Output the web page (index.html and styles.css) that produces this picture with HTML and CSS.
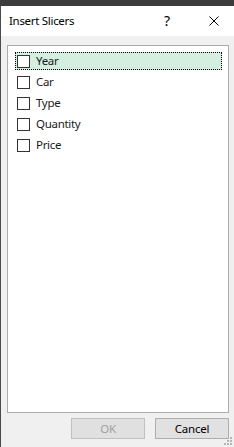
FILE: index.html
```html
<!DOCTYPE html>
<html>
<head>
<meta charset="utf-8">
<link rel="stylesheet" href="styles.css">
</head>
<body>
<div class="topbar"></div>
<div class="window">
  <div class="titlebar">
    <span class="title">Insert Slicers</span>
    <span class="help">?</span>
    <span class="close">
      <svg width="10" height="10" viewBox="0 0 10 10"><path d="M0.5 0.5 L9.5 9.5 M9.5 0.5 L0.5 9.5" stroke="#000" stroke-width="1" fill="none"/></svg>
    </span>
  </div>
  <div class="content">
    <div class="listbox">
      <div class="item selected"><span class="check"></span><span class="label">Year</span></div>
      <div class="item"><span class="check"></span><span class="label">Car</span></div>
      <div class="item"><span class="check"></span><span class="label">Type</span></div>
      <div class="item"><span class="check"></span><span class="label">Quantity</span></div>
      <div class="item"><span class="check"></span><span class="label">Price</span></div>
    </div>
    <div class="footer">
      <button class="btn disabled">OK</button>
      <button class="btn">Cancel</button>
    </div>
  </div>
  <svg class="grip" width="9" height="9" viewBox="0 0 9 9">
    <g fill="#b4b4b4">
      <rect x="6" y="0" width="2" height="2"/>
      <rect x="3" y="3" width="2" height="2"/>
      <rect x="6" y="3" width="2" height="2"/>
      <rect x="0" y="6" width="2" height="2"/>
      <rect x="3" y="6" width="2" height="2"/>
      <rect x="6" y="6" width="2" height="2"/>
    </g>
  </svg>
</div>
</body>
</html>
```
FILE: styles.css
```css
html, body {
  margin: 0;
  padding: 0;
}
body {
  width: 234px;
  height: 447px;
  overflow: hidden;
  background: #f0f0f0;
  font-family: "Segoe UI", "Noto Sans", "Open Sans", sans-serif;
  font-size: 11.5px;
  letter-spacing: -0.3px;
}
.topbar {
  height: 6px;
  background: #3c3c3c;
}
.window {
  position: relative;
  height: 441px;
  border-left: 1px solid #4b4b4b;
  box-sizing: border-box;
  display: flex;
  flex-direction: column;
}
.titlebar {
  height: 30px;
  background: #ffffff;
  display: flex;
  align-items: center;
  padding-left: 8px;
  color: #000;
}
.title {
  flex: 1;
  font-size: 11.5px;
  padding-bottom: 2px;
}
.help {
  width: 20px;
  font-size: 14px;
  letter-spacing: 0;
  margin-right: 25px;
  padding-bottom: 2px;
}
.close {
  width: 10px;
  height: 10px;
  margin-right: 15px;
  display: flex;
}
.content {
  flex: 1;
  display: flex;
  flex-direction: column;
  padding: 9px 5px 8px 6px;
}
.listbox {
  height: 368px;
  box-sizing: border-box;
  background: #fff;
  border: 1px solid #acacac;
  padding: 6px 6px 0 7px;
  display: flex;
  flex-direction: column;
  gap: 3px;
}
.item {
  height: 18px;
  box-sizing: border-box;
  display: flex;
  align-items: center;
  padding-left: 1px;
  border: 1px solid transparent;
  color: #1a1a1a;
}
.item.selected {
  background: #d4efdf;
  border: 1px dotted #000;
}
.check {
  width: 13px;
  height: 13px;
  box-sizing: border-box;
  border: 1px solid #333;
  background: #fff;
  margin-top: 1px;
  margin-right: 6px;
}
.label {
  font-size: 11.5px;
  line-height: 16px;
}
.footer {
  display: flex;
  justify-content: flex-end;
  gap: 10px;
  margin-top: 5px;
}
.btn {
  width: 74px;
  height: 21px;
  box-sizing: border-box;
  margin: 0;
  padding: 0;
  background: #e1e1e1;
  border: 1px solid #adadad;
  font-family: "Segoe UI", "Noto Sans", "Open Sans", sans-serif;
  font-size: 11.5px;
  letter-spacing: -0.2px;
  color: #000;
}
.btn.disabled {
  color: #a0a0a0;
  border-color: #bfbfbf;
  background: #e0e0e0;
}
.grip {
  position: absolute;
  right: 1px;
  bottom: 1px;
}
```
